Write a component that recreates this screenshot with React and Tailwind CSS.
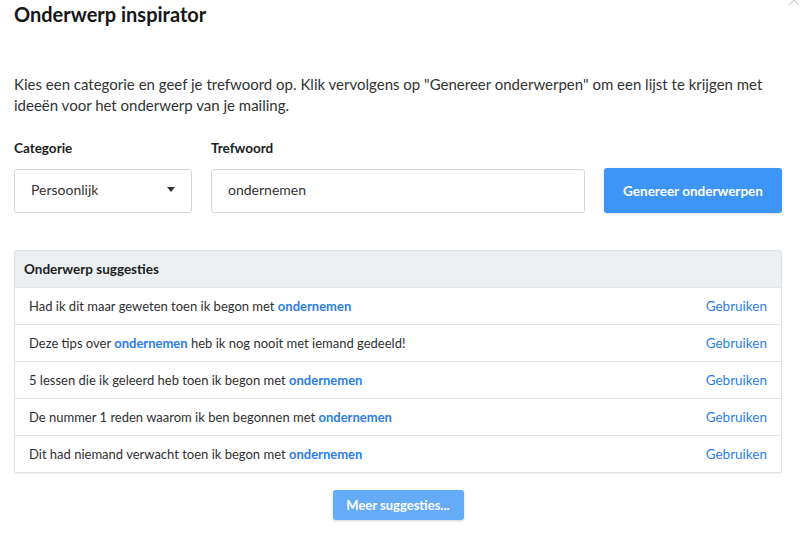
const suggestions = [
  ['Had ik dit maar geweten toen ik begon met ', ''],
  ['Deze tips over ', ' heb ik nog nooit met iemand gedeeld!'],
  ['5 lessen die ik geleerd heb toen ik begon met ', ''],
  ['De nummer 1 reden waarom ik ben begonnen met ', ''],
  ['Dit had niemand verwacht toen ik begon met ', ''],
];

const SuggestionRow = ({ before, after }) => (
  <div className="flex items-center justify-between h-[37px] px-[14px] border-t border-[#e3e6e8]">
    <div className="text-[13px] text-[#2f2f2f]">
      {before}
      <span className="font-bold text-[#2b7de9]">ondernemen</span>
      {after}
    </div>
    <button className="text-[13.5px] text-[#2b7de9]">Gebruiken</button>
  </div>
);

export default function App() {
  return (
    <div className="relative w-[800px] h-[539px] bg-white overflow-hidden font-['Lato',sans-serif] text-[#2b2b2b]">
      <svg className="absolute right-0 top-[-6px]" width="12" height="12" viewBox="0 0 12 12">
        <path d="M1 1l10 10M11 1L1 11" stroke="#d8d8d8" strokeWidth="1.5" />
      </svg>

      <div className="px-[14px] pt-[1px] w-[796px]">
        <h1 className="text-[20px] font-bold text-[#161616] leading-[26px]">Onderwerp inspirator</h1>

        <p className="mt-[47px] text-[15px] leading-[21px] text-[#333]">
          Kies een categorie en geef je trefwoord op. Klik vervolgens op "Genereer onderwerpen" om een lijst te krijgen met
          <br />
          ideeën voor het onderwerp van je mailing.
        </p>

        <div className="mt-[22px] flex items-end">
          <div className="w-[178px]">
            <div className="text-[13.5px] font-bold text-[#1d1d1d] mb-[11px]">Categorie</div>
            <div className="h-[44px] rounded-[3px] border border-[#d5d8db] flex items-center justify-between pl-[16px] pr-[16px] pb-[3px] text-[14px] text-[#333]">
              <span>Persoonlijk</span>
              <svg width="8" height="5" viewBox="0 0 8 5"><path d="M0 0h8L4 5z" fill="#333" /></svg>
            </div>
          </div>
          <div className="flex-1 ml-[19px]">
            <div className="text-[13.5px] font-bold text-[#1d1d1d] mb-[11px]">Trefwoord</div>
            <div className="h-[44px] rounded-[3px] border border-[#d5d8db] flex items-center pl-[16px] pb-[3px] text-[14px] text-[#333]">
              ondernemen
            </div>
          </div>
          <button className="ml-[19px] w-[178px] h-[45px] rounded-[3px] bg-[#3d95f5] text-white text-[13.5px] font-bold shadow-[0_1px_3px_rgba(0,0,0,0.15)]">
            Genereer onderwerpen
          </button>
        </div>

        <div className="mt-[37px] border border-[#e0e3e5] rounded-[2px] shadow-[0_1px_2px_rgba(0,0,0,0.06)]">
          <div className="h-[36px] bg-[#eceff1] flex items-center px-[9px] text-[13.5px] font-bold text-[#1d1d1d]">
            Onderwerp suggesties
          </div>
          {suggestions.map(([b, a], i) => (
            <SuggestionRow key={i} before={b} after={a} />
          ))}
        </div>

        <div className="flex justify-center mt-[17px]">
          <button className="w-[131px] h-[30px] rounded-[3px] bg-[#64acf7] text-white text-[13px] font-bold shadow-[0_1px_3px_rgba(0,0,0,0.18)]">
            Meer suggesties...
          </button>
        </div>
      </div>
    </div>
  );
}
